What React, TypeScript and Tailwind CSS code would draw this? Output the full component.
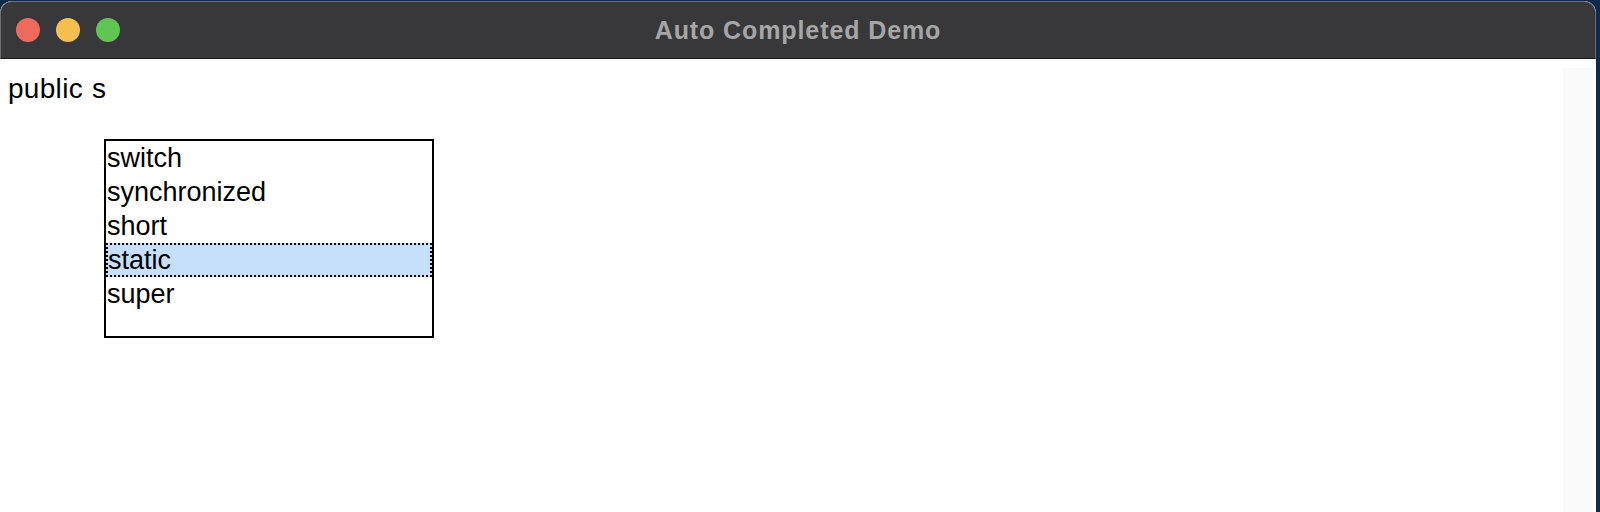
import React from "react";

const items = ["switch", "synchronized", "short", "static", "super"];

export default function App() {
  return (
    <div className="w-[1600px] h-[512px] bg-[#102a4c] overflow-hidden pt-[1px] pr-[4px]">
      <div className="h-[520px] bg-white rounded-t-[12px] overflow-hidden flex flex-col">
        <div className="h-[58px] shrink-0 bg-[#38383a] rounded-t-[12px] border-t border-x border-[#6e6e70] border-b-[#1a1a1a] border-b grid grid-cols-[1fr_auto_1fr] items-center">
          <div className="flex items-center gap-[16px] pl-[15px]">
            <span className="w-[24px] h-[24px] rounded-full bg-[#ee6a5e]" />
            <span className="w-[24px] h-[24px] rounded-full bg-[#f5bf4f]" />
            <span className="w-[24px] h-[24px] rounded-full bg-[#61c554]" />
          </div>
          <div
            className="text-[25px] font-bold tracking-[0.9px] text-[#a6a6a6] leading-none"
            style={{ fontFamily: '"Liberation Sans", Arial, sans-serif' }}
          >
            Auto Completed Demo
          </div>
          <div />
        </div>
        <div className="flex flex-1">
          <div
            className="flex-1 pl-[8px] pt-[13px] text-black"
            style={{ fontFamily: '"Liberation Sans", Arial, sans-serif' }}
          >
            <div className="text-[28px] leading-[34px] tracking-[0.3px] [word-spacing:1px]">public s</div>
            <div className="ml-[96px] mt-[33px] w-[330px] h-[199px] border-2 border-black bg-white">
              {items.map((it) => (
                <div
                  key={it}
                  className={
                    it === "static"
                      ? "h-[34px] text-[27px] leading-[30px] bg-[#c6dffa] border-2 border-dotted border-black"
                      : "h-[34px] text-[27px] leading-[34px] pl-[1px]"
                  }
                >
                  {it}
                </div>
              ))}
            </div>
          </div>
          <div className="w-[30px] mt-[9px] bg-[#fafafa]" />
          <div className="w-[3px]" />
        </div>
      </div>
    </div>
  );
}
